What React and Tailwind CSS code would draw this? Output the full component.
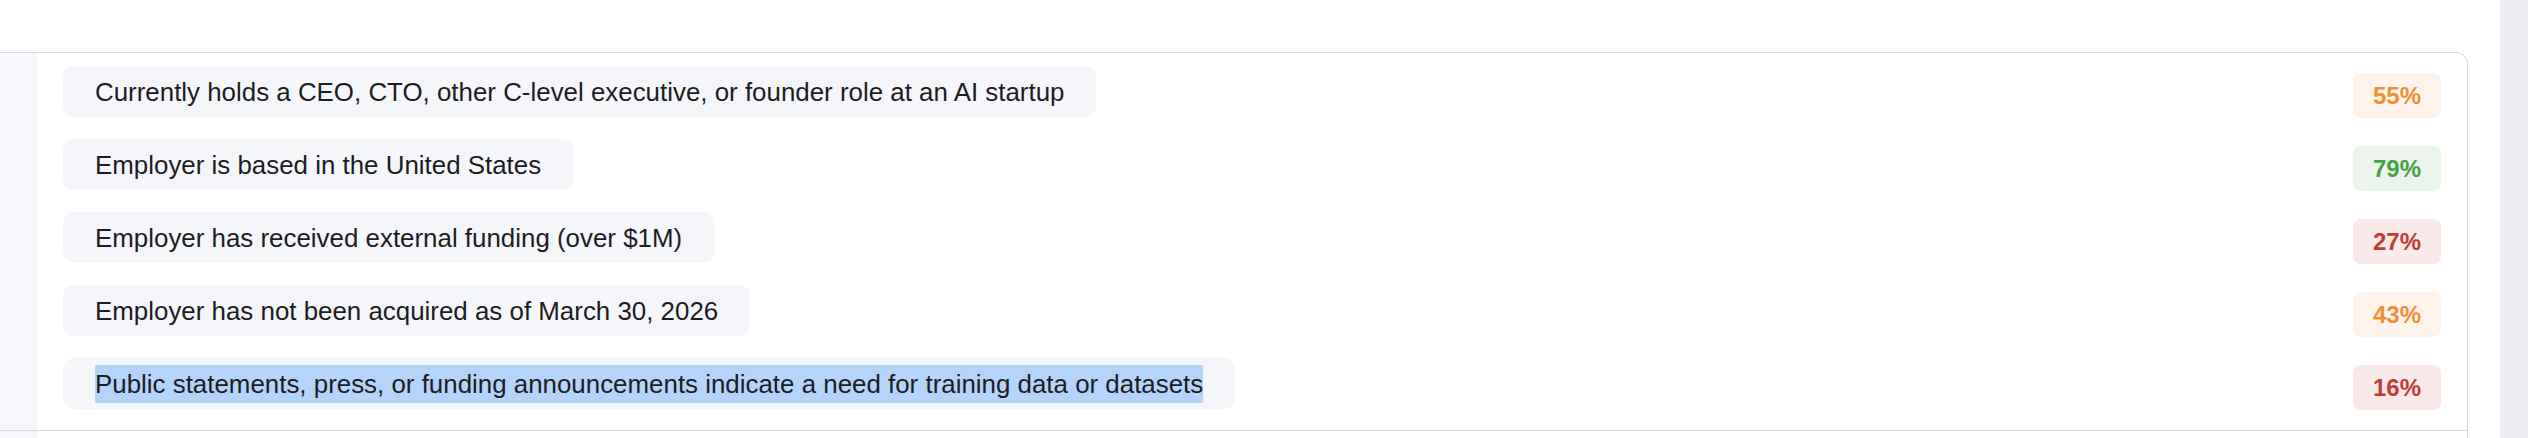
const criteria = [
  { text: "Currently holds a CEO, CTO, other C-level executive, or founder role at an AI startup", score: 55 },
  { text: "Employer is based in the United States", score: 79 },
  { text: "Employer has received external funding (over $1M)", score: 27 },
  { text: "Employer has not been acquired as of March 30, 2026", score: 43 },
  { text: "Public statements, press, or funding announcements indicate a need for training data or datasets", score: 16, selected: true },
];

function badgeClass(score) {
  if (score >= 70) return "bg-[#ebf5eb] text-[#47a047]";
  if (score >= 40) return "bg-[#fdf3ea] text-[#ef8f37]";
  return "bg-[#f9e9e8] text-[#c13c35]";
}

export default function App() {
  return (
    <div
      className="flex w-[2528px] h-[438px] overflow-hidden bg-white text-[#1d1d1f]"
      style={{ fontFamily: '"Liberation Sans", Arial, sans-serif' }}
    >
      <div className="flex-1 flex flex-col">
        <div className="h-[52px] shrink-0" />
        <div className="mr-[32px] flex-1 border-t border-r border-[#d3dbeb] rounded-tr-[12px] flex flex-col">
          <div className="flex border-b border-[#d3dbeb]">
            <div className="w-[37px] shrink-0 bg-[#f6f7fa]" />
            <div className="flex-1 flex flex-col gap-[21px] pt-[13px] pb-[20px] px-[26px]">
              {criteria.map((c) => (
                <div key={c.text} className="flex items-start justify-between">
                  <div className="h-[51px] flex items-center px-[32px] rounded-[10px] bg-[#f5f6fa] text-[25.9px]">
                    <span
                      className={`inline-block leading-[38px] h-[38px] ${c.selected ? "bg-[#b4d4fb]" : ""}`}
                    >
                      {c.text}
                    </span>
                  </div>
                  <div
                    className={`mt-[7px] w-[88px] h-[45px] rounded-[8px] flex items-center justify-center text-[24px] font-semibold ${badgeClass(c.score)}`}
                  >
                    {c.score}%
                  </div>
                </div>
              ))}
            </div>
          </div>
          <div className="flex flex-1">
            <div className="w-[37px] shrink-0 bg-[#f6f7fa]" />
          </div>
        </div>
      </div>
      <div className="w-[28px] shrink-0 bg-[#eeeff5]" />
    </div>
  );
}
